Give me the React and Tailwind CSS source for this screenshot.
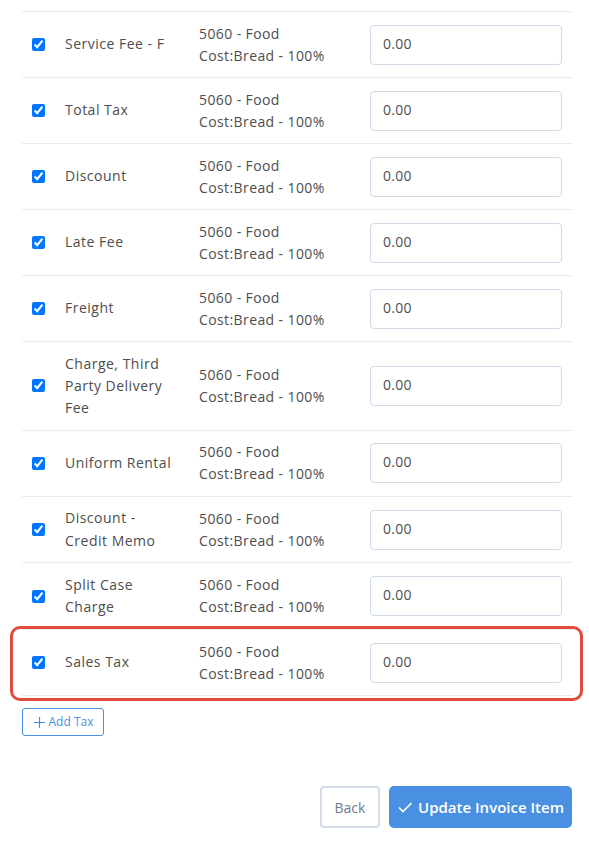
import { useState } from "react";

const taxes = [
  "Service Fee - F",
  "Total Tax",
  "Discount",
  "Late Fee",
  "Freight",
  "Charge, Third Party Delivery Fee",
  "Uniform Rental",
  "Discount - Credit Memo",
  "Split Case Charge",
  "Sales Tax",
];

function TaxRow({ name, highlight }) {
  const [value, setValue] = useState("0.00");
  return (
    <div className="relative grid grid-cols-[33px_134px_171px_1fr] items-center border-b border-[#e9ecef] py-[10.5px]">
      {highlight && (
        <div className="pointer-events-none absolute -left-[12px] -right-[11px] -top-[4px] -bottom-[6px] rounded-[10px] border-[3px] border-[#e14b3b]"></div>
      )}
      <div className="pl-[10px] flex items-center">
        <input type="checkbox" defaultChecked className="w-[13px] h-[13px] m-0 accent-[#0075ff]" />
      </div>
      <div className="px-[10px] text-[14px] tracking-[0.5px] leading-[22.3px] text-[#4d4d4d]">{name}</div>
      <div className="px-[10px] text-[14px] tracking-[0.4px] leading-[22px] text-[#4d4d4d]">
        <div>5060 - Food</div>
        <div>Cost:Bread - 100%</div>
      </div>
      <div className="px-[10px]">
        <input
          value={value}
          onChange={(e) => setValue(e.target.value)}
          className="w-full h-[40px] rounded-[4px] border border-[#cfdbe8] px-[12px] pb-[3px] text-[14px] tracking-[0.3px] text-[#495057] outline-none"
        />
      </div>
    </div>
  );
}

export default function App() {
  return (
    <div className="min-h-[850px] bg-white pl-[22px] pr-[17px] pt-[11px] pb-[24px] w-[589px] font-['Open_Sans',sans-serif]">
      <div className="border-t border-[#e9ecef]">
        {taxes.map((t, i) => (
          <TaxRow key={t} name={t} highlight={i === taxes.length - 1} />
        ))}
      </div>

      <button className="mt-[12px] h-[28px] w-[82px] flex items-center justify-center gap-[3px] rounded-[3px] border border-[#4a90e2] text-[12px] text-[#4a90e2]">
        <svg width="13" height="13" viewBox="0 0 14 14" fill="none" stroke="currentColor" strokeWidth="1.3">
          <path d="M7 1v12M1 7h12" />
        </svg>
        Add Tax
      </button>

      <div className="mt-[50px] flex justify-end gap-[9px]">
        <button className="h-[42px] w-[60px] rounded-[4px] border-2 border-[#d3dde9] text-[14px] text-[#6e7d92]">
          Back
        </button>
        <button className="h-[42px] w-[183px] rounded-[5px] bg-[#4a90e2] flex items-center justify-center gap-[5px] text-[15px] font-semibold text-white">
          <svg width="16" height="16" viewBox="0 0 16 16" fill="none" stroke="currentColor" strokeWidth="1.6">
            <path d="M2 8.5l4 4L14.5 4" />
          </svg>
          Update Invoice Item
        </button>
      </div>
    </div>
  );
}
